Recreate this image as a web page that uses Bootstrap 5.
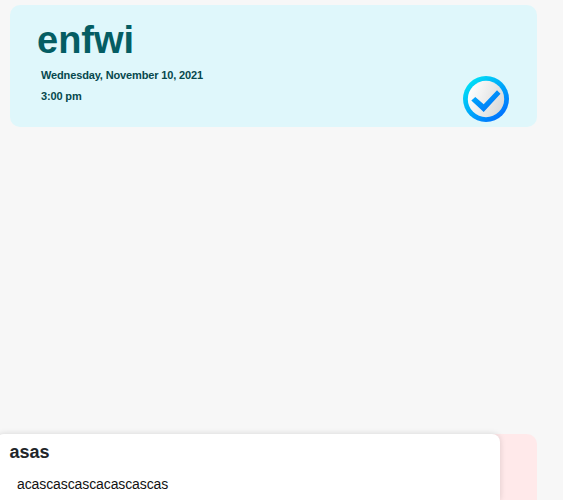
<!DOCTYPE html>
<html lang="en">
<head>
    <meta charset="UTF-8">
    <meta name="viewport" content="width=device-width, initial-scale=1.0">
    <title>Tasks</title>
    <link rel="stylesheet" href="https://cdn.jsdelivr.net/npm/bootstrap@5.3.0/dist/css/bootstrap.min.css">
    <style>
        html, body { height: 500px; overflow: hidden; }
        body { background-color: #f7f7f7; font-family: "Liberation Sans", Arial, sans-serif; }
        .page-wrap { width: 527px; margin-left: 10px; padding-top: 5px; }
        .event-card { background: #dff7fb; border-radius: 10px; height: 122px; padding: 0 28px 0 27px; color: #045d63; }
        .event-title { font-size: 38px; font-weight: 700; line-height: 44px; margin: 13px 0 0 0; color: #045d63; }
        .event-meta { font-size: 11px; letter-spacing: -.14px; font-weight: 700; margin: 0 0 0 4px; color: #06484d; }
        .event-date { margin-top: 4px; line-height: 18px; }
        .event-time { margin-top: 3px; line-height: 18px; }
        .check-icon { width: 46px; height: 46px; margin-top: 71px; }
        .spacer { height: 307px; }
        .note-stack { position: relative; height: 66px; }
        .note-back { background: #ffe9ea; border-radius: 10px 10px 0 0; height: 66px; }
        .note-front { position: absolute; left: -14px; top: 0; width: 504px; height: 66px; background: #fff; border-radius: 8px 8px 0 0; box-shadow: 0 0 6px rgba(0,0,0,.14); padding: 7px 0 0 13.5px; }
        .note-title { font-size: 18px; font-weight: 700; line-height: 22px; margin: 0; color: #212529; }
        .note-body { font-size: 14px; letter-spacing: -.1px; line-height: 20px; margin: 11px 0 0 7.5px; color: #111; }
    </style>
</head>
<body>
    <div class="page-wrap">
        <div class="event-card d-flex justify-content-between">
            <div>
                <h1 class="event-title">enfwi</h1>
                <p class="event-meta event-date">Wednesday, November 10, 2021</p>
                <p class="event-meta event-time">3:00 pm</p>
            </div>
            <svg class="check-icon" viewBox="0 0 46 46" aria-hidden="true">
                <defs>
                    <linearGradient id="ringGrad" x1="0.15" y1="0.1" x2="0.85" y2="0.9">
                        <stop offset="0" stop-color="#00e0f5"/>
                        <stop offset="1" stop-color="#0070ff"/>
                    </linearGradient>
                    <linearGradient id="faceGrad" x1="0" y1="0.3" x2="1" y2="0.7">
                        <stop offset="0" stop-color="#ffffff"/>
                        <stop offset="1" stop-color="#d8d8d8"/>
                    </linearGradient>
                    <linearGradient id="tickGrad" x1="0" y1="0" x2="1" y2="1">
                        <stop offset="0" stop-color="#00b4ff"/>
                        <stop offset="1" stop-color="#0068f5"/>
                    </linearGradient>
                </defs>
                <circle cx="23" cy="23" r="23" fill="url(#ringGrad)"/>
                <circle cx="23" cy="23" r="18.2" fill="url(#faceGrad)"/>
                <path d="M8.3 24.5 L12.3 21 L20.7 28.3 L34 14.3 L37.5 17.7 L20.7 36 Z" fill="url(#tickGrad)"/>
            </svg>
        </div>
        <div class="spacer"></div>
        <div class="note-stack">
            <div class="note-back"></div>
            <div class="note-front">
                <h2 class="note-title">asas</h2>
                <p class="note-body">acascascascacascascas</p>
            </div>
        </div>
    </div>
    <script src="https://cdn.jsdelivr.net/npm/bootstrap@5.3.0/dist/js/bootstrap.bundle.min.js"></script>
</body>
</html>
